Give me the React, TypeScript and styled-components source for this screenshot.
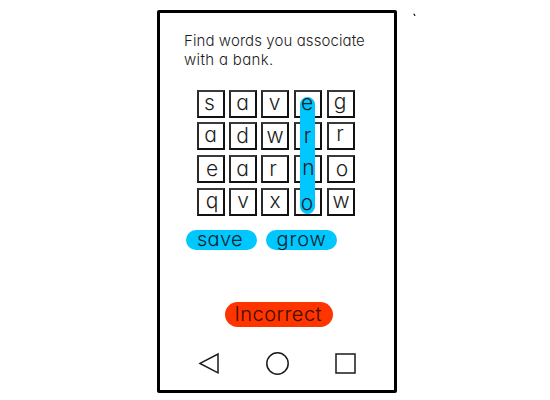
import React from "react";
import styled, { createGlobalStyle } from "styled-components";

const GlobalStyle = createGlobalStyle`
  * { box-sizing: border-box; }
  body {
    margin: 0;
    background: #fff;
    color: #1c1c1c;
    font-family: "Century Gothic", Inter, "Open Sans", sans-serif;
    font-feature-settings: "cv11" 1;
    font-weight: 300;
  }
`;

const Page = styled.div`
  width: 550px;
  height: 400px;
  padding: 10px 0 0 157px;
  display: flex;
  align-items: flex-start;
  overflow: hidden;
`;

const Phone = styled.main`
  width: 240px;
  height: 383px;
  flex: none;
  border: 3px solid #000;
  border-radius: 2px;
  display: flex;
  flex-direction: column;
`;

const StrayMark = styled.span`
  margin: 1px 0 0 15px;
  font-size: 15px;
  font-weight: 400;
  line-height: 17px;
  color: #000;
  will-change: transform;
`;

const Prompt = styled.h1`
  margin: 18px 0 0 24px;
  height: 38px;
  font-size: 15px;
  font-weight: 300;
  line-height: 19px;
`;

const PromptLine = styled.span<{ $spacing: number }>`
  display: block;
  white-space: nowrap;
  letter-spacing: ${(p) => p.$spacing}px;
`;

const Board = styled.div`
  position: relative;
  margin: 21px 0 0 37px;
  display: grid;
  grid-template-columns: 32px 32px 33px 33px 28px;
  grid-template-rows: 32px 33px 33px 28px;
`;

const Cell = styled.div`
  width: 28px;
  height: 28px;
  border: 2px solid #111;
  border-top-color: #3a3a3a;
  border-left-color: #2a2a2a;
  display: flex;
  align-items: center;
  justify-content: center;
`;

const Letter = styled.span<{ $x: number; $y: number }>`
  position: relative;
  z-index: 2;
  font-size: 21px;
  line-height: 24px;
  transform: translate(${(p) => p.$x}px, ${(p) => p.$y}px);
`;

const Selection = styled.div`
  position: absolute;
  z-index: 1;
  left: 103px;
  top: 7px;
  width: 15px;
  height: 117px;
  border-radius: 8px;
  background: #00c8ff;
`;

const FoundWords = styled.div`
  margin: 13.5px 0 0 26px;
  display: flex;
  gap: 9px;
`;

const Word = styled.div<{ $left: number; $drop: number; $spacing: number }>`
  width: 71px;
  height: 20px;
  padding-left: ${(p) => p.$left}px;
  border-radius: 10px;
  background: #00c8ff;
  color: #08242e;
  font-size: 20px;
  line-height: ${(p) => 18 + p.$drop * 2}px;
  letter-spacing: ${(p) => p.$spacing}px;
`;

const Verdict = styled.div`
  margin: 52.5px 0 0 64.5px;
  width: 108px;
  height: 25px;
  padding-left: 10px;
  border-radius: 13px;
  background: #ff3500;
  color: #400b00;
  font-size: 20px;
  line-height: 24px;
  letter-spacing: 0.5px;
`;

const NavBar = styled.nav`
  margin: 24px 0 0 38px;
  width: 160px;
  display: flex;
  justify-content: space-between;
`;

const NavIcon = styled.svg`
  display: block;
  width: 24px;
  height: 24px;
  fill: none;
  stroke: #1a1a1a;
  stroke-width: 1.5;
`;

type Tile = [letter: string, x: number, y: number];

const tiles: Tile[] = [
  ["s", -1.5, -1], ["a", -0.5, -1], ["v", -0.5, -1], ["e", -1, -1], ["g", -1, -2],
  ["a", -0.5, -1], ["d", -0.5, 0], ["w", 0, 0], ["r", -0.5, 0], ["r", -1, -2],
  ["e", 1, 0], ["a", -0.5, 0], ["r", -2, 0], ["n", 0.5, -1], ["o", 1, 0],
  ["q", 1, -1], ["v", 0, -1], ["x", 0, -1], ["o", -1, 1], ["w", 0, -1],
];

export default function App() {
  return (
    <>
      <GlobalStyle />
      <Page>
        <Phone>
          <Prompt>
            <PromptLine $spacing={0.09}>Find words you associate</PromptLine>
            <PromptLine $spacing={0.33}>with a bank.</PromptLine>
          </Prompt>
          <Board>
            {tiles.map(([letter, x, y], i) => (
              <Cell key={i}>
                <Letter $x={x} $y={y}>{letter}</Letter>
              </Cell>
            ))}
            <Selection />
          </Board>
          <FoundWords>
            <Word $left={11} $drop={0} $spacing={0.3}>save</Word>
            <Word $left={10.5} $drop={0.5} $spacing={0.9}>grow</Word>
          </FoundWords>
          <Verdict>Incorrect</Verdict>
          <NavBar>
            <NavIcon viewBox="0 0 24 24"><path d="M2 12.4 20 3v18.8Z" /></NavIcon>
            <NavIcon viewBox="0 0 24 24"><circle cx="11.5" cy="12.5" r="10.7" /></NavIcon>
            <NavIcon viewBox="0 0 24 24"><rect x="2" y="3" width="19" height="19" /></NavIcon>
          </NavBar>
        </Phone>
        <StrayMark>`</StrayMark>
      </Page>
    </>
  );
}
